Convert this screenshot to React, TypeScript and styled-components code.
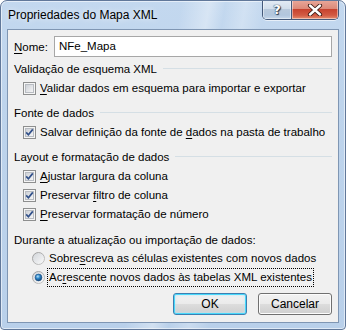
import React from 'react';
import styled, { createGlobalStyle } from 'styled-components';

const GlobalStyle = createGlobalStyle`
  html, body {
    margin: 0;
    padding: 0;
    background: #ffffff;
  }
  body {
    font-family: "Liberation Sans", Arial, sans-serif;
    font-size: 11.5px;
    color: #000;
  }
`;

const Window = styled.div`
  width: 346px;
  height: 330px;
  box-sizing: border-box;
  display: flex;
  flex-direction: column;
  border: 1px solid #61789a;
  border-radius: 7px 7px 4px 4px;
  padding: 0 6px 6px;
  background:
    linear-gradient(100deg, rgba(255,255,255,0) 45%, rgba(255,255,255,0.35) 52%, rgba(255,255,255,0) 56%, rgba(255,255,255,0.25) 61%, rgba(255,255,255,0) 66%),
    linear-gradient(180deg, #c3d8ef 0%, #bed4ec 30%, #b9d0ea 100%);
  box-shadow: inset 0 0 0 1px rgba(255,255,255,0.55);
  overflow: hidden;
`;

const TitleBar = styled.div`
  height: 28px;
  display: flex;
  align-items: flex-start;
  justify-content: space-between;
`;

const Title = styled.div`
  padding: 7px 0 0 1px;
  font-size: 12px;
  color: #000;
  text-shadow: 0 0 6px rgba(255,255,255,0.9);
`;

const Caption = styled.div`
  display: flex;
  margin-top: -1px;
  border: 1px solid #44597a;
  border-top: none;
  border-radius: 0 0 5px 5px;
  overflow: hidden;
  height: 19px;
  box-shadow: 0 1px 0 rgba(255,255,255,0.6);
`;

const CapButton = styled.div<{ $close?: boolean }>`
  width: ${(p) => (p.$close ? '46px' : '28px')};
  display: flex;
  align-items: center;
  justify-content: center;
  box-shadow: inset 0 0 0 1px rgba(255,255,255,0.45);
  border-left: ${(p) => (p.$close ? '1px solid #44597a' : 'none')};
  background: ${(p) =>
    p.$close
      ? 'linear-gradient(180deg, #e9a99b 0%, #dc8a79 45%, #c7432f 50%, #d25a43 80%, #e58e6f 100%)'
      : 'linear-gradient(180deg, #e4ecf5 0%, #d2deeb 45%, #b8c9dc 50%, #b2c6dd 80%, #c7d8ea 100%)'};
`;

const Help = styled.span`
  font-family: "DejaVu Sans", sans-serif;
  font-weight: bold;
  font-size: 13px;
  color: #fff;
  line-height: 1;
  text-shadow: 0 0 1px #2a3a52, 0 0 1px #2a3a52, 1px 1px 1px #2a3a52;
`;

const Client = styled.div`
  flex: 1;
  display: flex;
  flex-direction: column;
  background: #f0f0f0;
  border: 1px solid #7f96b3;
  padding: 6px 6px 0;
`;

const NameRow = styled.div`
  display: flex;
  align-items: center;
  height: 21px;
`;

const NameLabel = styled.label`
  width: 40px;
  flex-shrink: 0;
`;

const TextBox = styled.div`
  flex: 1;
  height: 21px;
  box-sizing: border-box;
  border: 1px solid #a7a7a7;
  background: #fff;
  padding: 0 4px;
  line-height: 19px;
`;

const SectionHead = styled.div<{ $top: number }>`
  display: flex;
  align-items: center;
  gap: 6px;
  height: 21px;
  margin-top: ${(p) => p.$top}px;
  white-space: nowrap;
  &::after {
    content: '';
    flex: 1;
    height: 1px;
    background: #d5dfe5;
  }
`;

const PlainHead = styled.div`
  height: 18px;
  line-height: 18px;
  margin-top: 7px;
  white-space: nowrap;
`;

const OptionRow = styled.div<{ $indent: number }>`
  display: flex;
  align-items: center;
  height: 19px;
  padding-left: ${(p) => p.$indent}px;
  gap: 3px;
  white-space: nowrap;
  svg {
    flex-shrink: 0;
  }
`;

const OptionText = styled.span<{ $focus?: boolean }>`
  padding: 0 1px;
  line-height: 17px;
  outline: ${(p) => (p.$focus ? '1px dotted #000' : 'none')};
  outline-offset: 0;
`;

const Key = styled.u`
  text-underline-offset: 2px;
`;

const Buttons = styled.div`
  display: flex;
  justify-content: flex-end;
  gap: 11px;
  margin-top: 6px;
`;

const Button = styled.button<{ $default?: boolean }>`
  width: 74px;
  height: 22px;
  box-sizing: border-box;
  font-family: inherit;
  font-size: 12px;
  color: #000;
  border-radius: 3px;
  padding: 0;
  border: 1px solid ${(p) => (p.$default ? '#3c7fb1' : '#707070')};
  background: linear-gradient(180deg, #f2f2f2 0%, #ebebeb 49%, #dddddd 50%, #cfcfcf 100%);
  box-shadow: ${(p) =>
    p.$default ? 'inset 0 0 0 1px #48d8fb, inset 0 0 3px 1px #b7e5f7' : 'inset 0 0 0 1px #fcfcfc'};
`;

const CheckBox: React.FC<{ checked?: boolean }> = ({ checked }) => (
  <svg width="13" height="13" viewBox="0 0 13 13">
    <defs>
      <linearGradient id="cbfill" x1="0" y1="0" x2="1" y2="1">
        <stop offset="0" stopColor="#cbcfd5" />
        <stop offset="1" stopColor="#f7f7f7" />
      </linearGradient>
    </defs>
    <rect x="0.5" y="0.5" width="12" height="12" fill="#f5f5f5" stroke="#8e8f8f" />
    <rect x="2.5" y="2.5" width="8" height="8" fill="url(#cbfill)" stroke="#b8bcc2" />
    {checked && (
      <path d="M3.2 6.4 L5.4 8.8 L9.8 3.4" fill="none" stroke="#31508a" strokeWidth="1.7" />
    )}
  </svg>
);

const Radio: React.FC<{ checked?: boolean }> = ({ checked }) => (
  <svg width="13" height="13" viewBox="0 0 13 13">
    <defs>
      <linearGradient id="rdring" x1="0" y1="0" x2="1" y2="1">
        <stop offset="0" stopColor="#9a9a9a" />
        <stop offset="1" stopColor="#c8c8c8" />
      </linearGradient>
      <linearGradient id="rdfill" x1="0" y1="0" x2="1" y2="1">
        <stop offset="0" stopColor="#d0d4d9" />
        <stop offset="1" stopColor="#fbfbfb" />
      </linearGradient>
      <radialGradient id="rddot" cx="0.4" cy="0.35" r="0.7">
        <stop offset="0" stopColor="#b4e2fb" />
        <stop offset="0.45" stopColor="#2b84c6" />
        <stop offset="1" stopColor="#0d3a6a" />
      </radialGradient>
    </defs>
    <circle cx="6.5" cy="6.5" r="6" fill="url(#rdfill)" stroke="url(#rdring)" />
    {checked && <circle cx="6.5" cy="6.5" r="3.4" fill="url(#rddot)" stroke="#1d4f86" strokeWidth="0.6" />}
  </svg>
);

const CloseGlyph = () => (
  <svg width="16" height="12" viewBox="0 0 16 12">
    <path d="M3 1.5 L13 10.5 M13 1.5 L3 10.5" stroke="#3a1a14" strokeWidth="4.2" strokeLinecap="round" />
    <path d="M3 1.5 L13 10.5 M13 1.5 L3 10.5" stroke="#ffffff" strokeWidth="2.4" strokeLinecap="round" />
  </svg>
);

const App: React.FC = () => (
  <>
    <GlobalStyle />
    <Window>
      <TitleBar>
        <Title>Propriedades do Mapa XML</Title>
        <Caption>
          <CapButton>
            <Help>?</Help>
          </CapButton>
          <CapButton $close>
            <CloseGlyph />
          </CapButton>
        </Caption>
      </TitleBar>
      <Client>
        <NameRow>
          <NameLabel>
            <Key>N</Key>ome:
          </NameLabel>
          <TextBox>NFe_Mapa</TextBox>
        </NameRow>

        <SectionHead $top={1}>Validação de esquema XML</SectionHead>
        <OptionRow $indent={9}>
          <CheckBox />
          <OptionText>
            <Key>V</Key>alidar dados em esquema para importar e exportar
          </OptionText>
        </OptionRow>

        <SectionHead $top={4}>Fonte de dados</SectionHead>
        <OptionRow $indent={9}>
          <CheckBox checked />
          <OptionText>
            Salvar definição da fonte de <Key>d</Key>ados na pasta de trabalho
          </OptionText>
        </OptionRow>

        <SectionHead $top={4}>Layout e formatação de dados</SectionHead>
        <OptionRow $indent={9}>
          <CheckBox checked />
          <OptionText>
            <Key>A</Key>justar largura da coluna
          </OptionText>
        </OptionRow>
        <OptionRow $indent={9}>
          <CheckBox checked />
          <OptionText>
            Preservar <Key>f</Key>iltro de coluna
          </OptionText>
        </OptionRow>
        <OptionRow $indent={9}>
          <CheckBox checked />
          <OptionText>
            <Key>P</Key>reservar formatação de número
          </OptionText>
        </OptionRow>

        <PlainHead>Durante a atualização ou importação de dados:</PlainHead>
        <OptionRow $indent={18}>
          <Radio />
          <OptionText>
            Sobre<Key>s</Key>creva as células existentes com novos dados
          </OptionText>
        </OptionRow>
        <OptionRow $indent={18}>
          <Radio checked />
          <OptionText $focus>
            Ac<Key>r</Key>escente novos dados às tabelas XML existentes
          </OptionText>
        </OptionRow>

        <Buttons>
          <Button $default>OK</Button>
          <Button>Cancelar</Button>
        </Buttons>
      </Client>
    </Window>
  </>
);

export default App;
